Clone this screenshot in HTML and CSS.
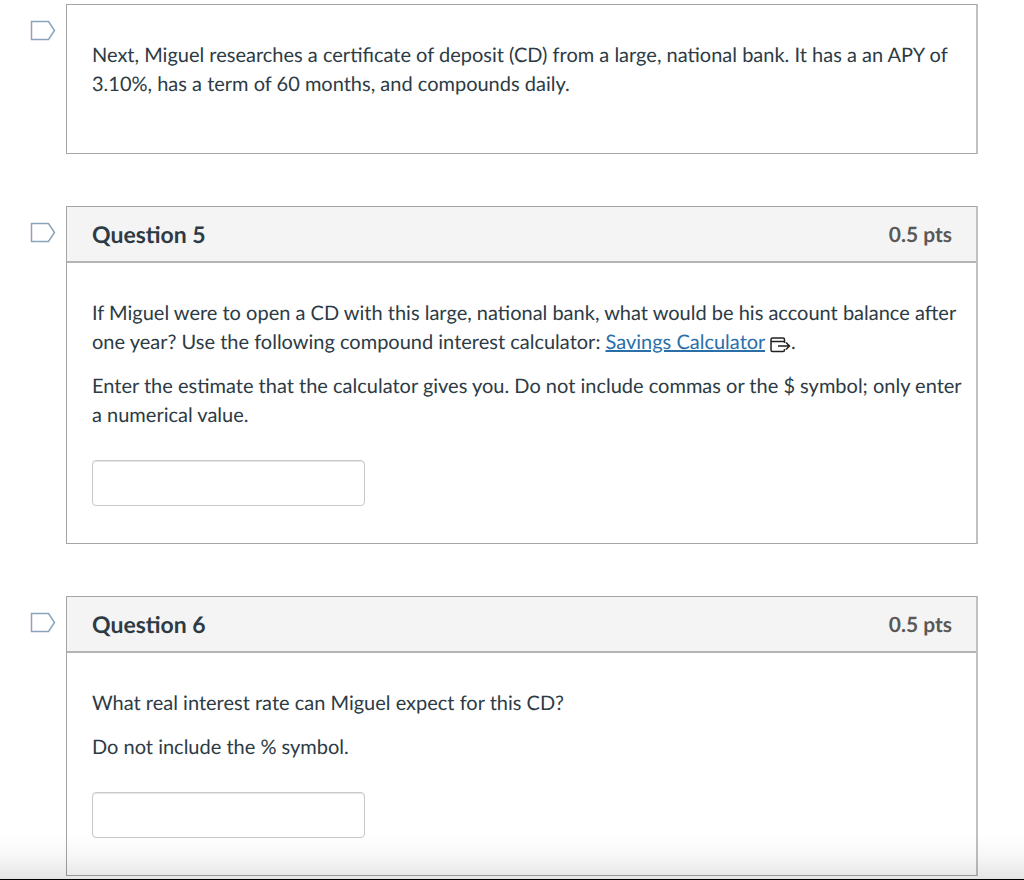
FILE: index.html
```html
<!DOCTYPE html>
<html lang="en">
<head>
<meta charset="utf-8">
<meta name="viewport" content="width=device-width, initial-scale=1">
<title>Quiz</title>
<link rel="stylesheet" href="styles.css">
</head>
<body>
<main class="quiz">
  <section class="item">
    <button class="flag" type="button" aria-label="Flag this text"><svg width="26" height="22" viewBox="0 0 26 22"><path d="M1.500 1.500H18.500L24.500 10.500L18.500 19.500H1.500Z"/></svg></button>
    <div class="card">
      <div class="body body-text">
        <p>Next, Miguel researches a certificate of deposit (CD) from a large, national bank. It has a an APY of 3.10%, has a term of 60 months, and compounds daily.</p>
      </div>
    </div>
  </section>

  <section class="item">
    <button class="flag" type="button" aria-label="Flag question 5"><svg width="26" height="22" viewBox="0 0 26 22"><path d="M1.500 1.500H18.500L24.500 10.500L18.500 19.500H1.500Z"/></svg></button>
    <div class="card">
      <header class="head">
        <h2 class="title">Question 5</h2>
        <span class="points">0.5 pts</span>
      </header>
      <div class="body">
        <p>If Miguel were to open a CD with this large, national bank, what would be his account balance after one year? Use the following compound interest calculator: <a class="link" href="#">Savings Calculator</a> <svg class="external" width="21" height="16" viewBox="0 0 21 16" aria-hidden="true"><path d="M14.500 6V2.500Q14.500 1 13 1H2.500Q1 1 1 2.500V13Q1 14.500 2.500 14.500H13Q14.500 14.500 14.500 13V12M1 4.500H14.500M8 9H19.500M16 5.500L19.500 9L16 12.500"/></svg>.</p>
        <p>Enter the estimate that the calculator gives you. Do not include commas or the $ symbol; only enter a numerical value.</p>
        <input class="answer" type="text" aria-label="Answer to question 5">
      </div>
    </div>
  </section>

  <section class="item">
    <button class="flag" type="button" aria-label="Flag question 6"><svg width="26" height="22" viewBox="0 0 26 22"><path d="M1.500 1.500H18.500L24.500 10.500L18.500 19.500H1.500Z"/></svg></button>
    <div class="card">
      <header class="head">
        <h2 class="title">Question 6</h2>
        <span class="points">0.5 pts</span>
      </header>
      <div class="body">
        <p>What real interest rate can Miguel expect for this CD?</p>
        <p>Do not include the % symbol.</p>
        <input class="answer" type="text" aria-label="Answer to question 6">
      </div>
    </div>
  </section>
</main>
<div class="shade"></div>
</body>
</html>
```
FILE: styles.css
```css
* {
  box-sizing: border-box;
}

body {
  margin: 0;
  background: #fff;
  color: #2d3b45;
  font-family: Lato, "Liberation Sans", sans-serif;
  font-size: 20px;
  line-height: 29px;
  text-rendering: geometricPrecision;
}

.quiz {
  display: flex;
  flex-direction: column;
  gap: 52px;
  padding: 4px 46px 4px 30px;
}

.item {
  display: flex;
  align-items: flex-start;
  gap: 10px;
}

.flag {
  display: flex;
  margin: 16px 0 0;
  padding: 0;
  border: 0;
  background: none;
}

.flag svg {
  fill: #fff;
  stroke: #8ba4b8;
  stroke-width: 1.500;
}

.card {
  flex: 1;
  border: 1px solid #a5a5a5;
  border-right: 2px solid #c1c1c1;
}

.head {
  display: flex;
  align-items: center;
  justify-content: space-between;
  padding: 13px 24px 12px 25px;
  border-bottom: 2px solid #b4b4b4;
  background: #f4f4f4;
}

.title {
  margin: 0;
  font-size: 23px;
  font-weight: 700;
}

.points {
  color: #595959;
  font-size: 21px;
  font-weight: 700;
}

.body {
  padding: 36px 10px 37px 25px;
}

.body-text {
  padding-bottom: 54px;
}

.body p {
  margin: 0 0 15px;
}

.body-text p {
  margin: 0;
}

.link {
  color: #2b6fa8;
  text-decoration: underline;
}

.external {
  vertical-align: -4px;
  fill: none;
  stroke: #222;
  stroke-width: 1.500;
}

.answer {
  display: block;
  width: 273px;
  max-width: 100%;
  height: 46px;
  margin-top: 30px;
  padding: 8px 10px;
  border: 1px solid #c8c8c8;
  border-radius: 4px;
  background: #fff;
  box-shadow: inset 0 1px 1px #e6e6e6;
  color: inherit;
  font: inherit;
}

.shade {
  position: fixed;
  right: 0;
  bottom: 0;
  left: 0;
  height: 46px;
  border-bottom: 1px solid #000;
  background: linear-gradient(rgba(0, 0, 0, 0), rgba(0, 0, 0, 0.03) 50%, rgba(0, 0, 0, 0.1));
  pointer-events: none;
}
```
